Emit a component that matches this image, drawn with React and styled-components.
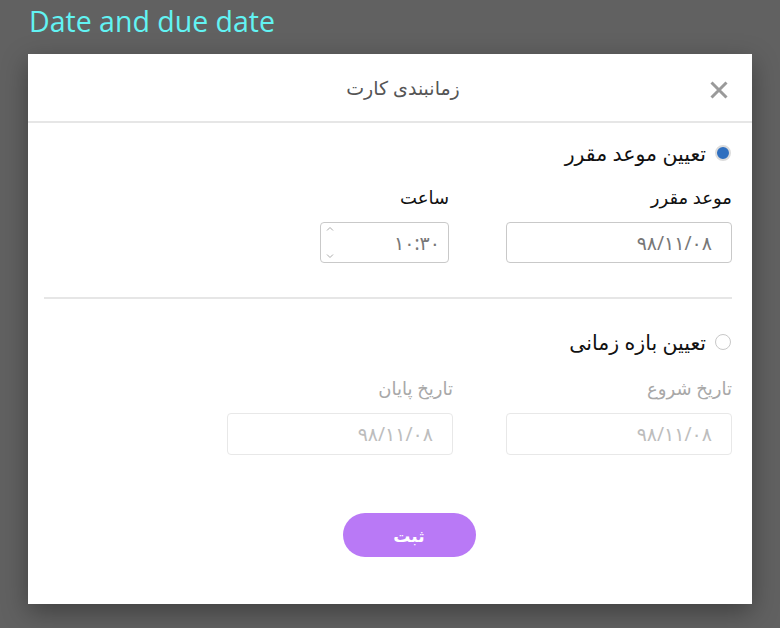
import React from 'react'
import styled, { createGlobalStyle } from 'styled-components'

const GlobalStyle = createGlobalStyle`
  html, body {
    margin: 0;
    padding: 0;
    background: #616161;
  }
  body {
    font-family: 'Noto Sans', 'DejaVu Sans', sans-serif;
  }
`

const Page = styled.div`
  width: 780px;
  height: 628px;
  padding: 0 28px;
  box-sizing: border-box;
  overflow: hidden;
`

const PageTitle = styled.h1`
  margin: 0;
  height: 54px;
  padding-left: 1px;
  font-family: 'Open Sans', 'Noto Sans', sans-serif;
  font-weight: 400;
  font-size: 28.5px;
  line-height: 42px;
  color: #62f3f3;
`

const Modal = styled.div`
  width: 724px;
  height: 550px;
  background: #fff;
  box-shadow: 0 8px 24px rgba(0, 0, 0, 0.35);
  display: flex;
  flex-direction: column;
`

const Header = styled.div`
  height: 67px;
  flex-shrink: 0;
  display: flex;
  align-items: center;
  justify-content: center;
  position: relative;
  border-bottom: 2px solid #e6e6e6;
`

const HeaderTitle = styled.div`
  direction: rtl;
  font-size: 19px;
  color: #555;
  padding-left: 26px;
`

const CloseButton = styled.button`
  position: absolute;
  right: 24px;
  top: 27px;
  width: 18px;
  height: 18px;
  padding: 0;
  border: none;
  background: none;
  display: flex;
`

const Body = styled.div`
  direction: rtl;
  padding: 17px 20px 0 16px;
  display: flex;
  flex-direction: column;
`

const RadioRow = styled.label`
  display: flex;
  align-items: center;
  gap: 9px;
  height: 26px;
  padding-right: 1px;
  font-size: 20.5px;
  color: #111;
`

const Radio = styled.span`
  width: 16px;
  height: 16px;
  box-sizing: border-box;
  border-radius: 50%;
  flex-shrink: 0;
  border: ${p => (p.checked ? '2px solid #dcdcdc' : '1px solid #c8c8c8')};
  background: ${p => (p.checked ? '#2f6fbf' : '#fff')};
`

const FieldGrid = styled.div`
  display: grid;
  grid-template-columns: 226px 226px;
  column-gap: 53px;
  row-gap: 13px;
  margin-top: ${p => p.top}px;
`

const FieldLabel = styled.div`
  font-size: 18px;
  line-height: 24px;
  height: 24px;
  color: ${p => (p.disabled ? '#a8a8a8' : '#111')};
  padding-right: ${p => (p.shift ? 4 : 0)}px;
`

const Input = styled.div`
  height: ${p => (p.disabled ? 42 : 41)}px;
  box-sizing: border-box;
  width: ${p => (p.narrow ? '129px' : '100%')};
  margin-right: ${p => (p.narrow ? 4 : 0)}px;
  border: 1px solid ${p => (p.disabled ? '#e8e8e8' : '#c9c9c9')};
  border-radius: 4px;
  display: flex;
  align-items: center;
  padding: ${p => (p.narrow ? '0 8px 0 5px' : '0 19px')};
  font-size: 19px;
  color: ${p => (p.disabled ? '#bdbdbd' : '#777')};
`

const Value = styled.span`
  flex: 1;
`

const Spinner = styled.span`
  display: flex;
  flex-direction: column;
  justify-content: space-between;
  height: 33px;
`

const Divider = styled.div`
  height: 2px;
  background: #e6e6e6;
  margin: 34px 0 30px;
`

const ButtonRow = styled.div`
  display: flex;
  justify-content: center;
  padding-left: 42px;
  margin-top: 58px;
`

const SubmitButton = styled.button`
  width: 133px;
  height: 44px;
  border: none;
  border-radius: 22px;
  background: #b979f6;
  color: #fff;
  font-family: inherit;
  font-size: 17px;
  font-weight: 700;
`

const Chevron = ({ up }) => (
  <svg width="8" height="6" viewBox="0 0 8 6">
    <path
      d={up ? 'M1 4.5 L4 1.5 L7 4.5' : 'M1 1.5 L4 4.5 L7 1.5'}
      fill="none"
      stroke="#aaa"
      strokeWidth="1"
    />
  </svg>
)

const App = () => {
  return (
    <Page>
      <GlobalStyle />
      <PageTitle>Date and due date</PageTitle>
      <Modal>
        <Header>
          <HeaderTitle>زمانبندی کارت</HeaderTitle>
          <CloseButton>
            <svg width="18" height="18" viewBox="0 0 18 18">
              <path d="M1.5 1.5 L16.5 16.5 M16.5 1.5 L1.5 16.5" stroke="#9a9a9a" strokeWidth="3" />
            </svg>
          </CloseButton>
        </Header>
        <Body>
          <RadioRow>
            <Radio checked />
            تعیین موعد مقرر
          </RadioRow>
          <FieldGrid top={19}>
            <FieldLabel>موعد مقرر</FieldLabel>
            <FieldLabel shift>ساعت</FieldLabel>
            <Input>
              <Value>۹۸/۱۱/۰۸</Value>
            </Input>
            <Input narrow>
              <Value>۱۰:۳۰</Value>
              <Spinner>
                <Chevron up />
                <Chevron />
              </Spinner>
            </Input>
          </FieldGrid>
          <Divider />
          <RadioRow>
            <Radio />
            تعیین بازه زمانی
          </RadioRow>
          <FieldGrid top={21}>
            <FieldLabel disabled>تاریخ شروع</FieldLabel>
            <FieldLabel disabled>تاریخ پایان</FieldLabel>
            <Input disabled>
              <Value>۹۸/۱۱/۰۸</Value>
            </Input>
            <Input disabled>
              <Value>۹۸/۱۱/۰۸</Value>
            </Input>
          </FieldGrid>
          <ButtonRow>
            <SubmitButton>ثبت</SubmitButton>
          </ButtonRow>
        </Body>
      </Modal>
    </Page>
  )
}

export default App
